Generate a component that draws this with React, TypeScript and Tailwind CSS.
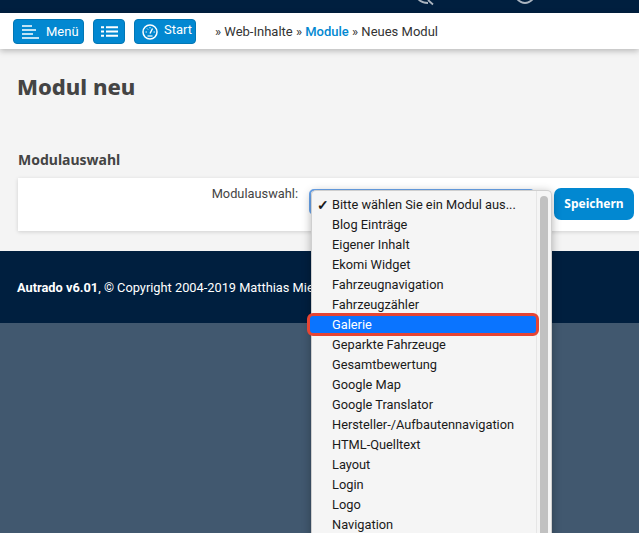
const modules = [
  "Blog Einträge",
  "Eigener Inhalt",
  "Ekomi Widget",
  "Fahrzeugnavigation",
  "Fahrzeugzähler",
  "Galerie",
  "Geparkte Fahrzeuge",
  "Gesamtbewertung",
  "Google Map",
  "Google Translator",
  "Hersteller-/Aufbautennavigation",
  "HTML-Quelltext",
  "Layout",
  "Login",
  "Logo",
  "Navigation",
];

function MenuIcon() {
  return (
    <svg width="17" height="14" viewBox="0 0 17 14" className="shrink-0">
      <path d="M0 1h10M0 5h14M0 9h11M0 13h17" stroke="white" strokeWidth="1.7" fill="none" />
    </svg>
  );
}

function ListIcon() {
  return (
    <svg width="17" height="11" viewBox="0 0 17 11">
      <path d="M0 1.2h3M0 5.5h3M0 9.8h3M5 1.2h12M5 5.5h12M5 9.8h12" stroke="white" strokeWidth="2" fill="none" />
    </svg>
  );
}

function GaugeIcon() {
  return (
    <svg width="16" height="16" viewBox="0 0 16 16" className="shrink-0">
      <circle cx="8" cy="8" r="7" stroke="white" strokeWidth="1.5" fill="none" />
      <path d="M8 9.5L10.5 4.5" stroke="white" strokeWidth="1.4" fill="none" />
      <path d="M3.5 8h1.5M11.5 8h1.5M5 4.5l1 1M8 3v1.3" stroke="white" strokeWidth="0.9" fill="none" />
      <path d="M5.5 12h5" stroke="white" strokeWidth="1.2" fill="none" />
    </svg>
  );
}

function TopBar() {
  return (
    <div className="relative h-[13px] shrink-0 overflow-hidden bg-[#001f3f]">
      <svg width="20" height="6" viewBox="0 0 20 6" className="absolute left-[417px] top-0">
        <path d="M1 -1Q5 3 11 3M11 0L16 4.5" stroke="#aab4bf" strokeWidth="1.8" fill="none" />
      </svg>
      <svg width="20" height="6" viewBox="0 0 20 6" className="absolute left-[515px] top-0">
        <path d="M2 -1Q10 7 18 -1" stroke="#aab4bf" strokeWidth="1.8" fill="none" />
      </svg>
    </div>
  );
}

function NavBar() {
  const btn =
    "flex h-[25px] items-center rounded-[4px] border border-[#0277b5] bg-[#0288d1] text-[13px] text-white";
  return (
    <div className="relative z-10 flex h-[36px] shrink-0 items-start bg-white pl-[13px] pt-[6px] shadow-[0_2px_6px_rgba(0,0,0,0.25)]">
      <button className={`${btn} w-[71px] gap-[7px] pl-[8px]`}>
        <MenuIcon />
        <span>Menü</span>
      </button>
      <button className={`${btn} ml-[9px] w-[32px] justify-center`}>
        <ListIcon />
      </button>
      <button className={`${btn} ml-[9px] w-[62px] gap-[6px] pl-[7px]`}>
        <GaugeIcon />
        <span className="-mt-[3px]">Start</span>
      </button>
      <div className="ml-[19px] mt-[4px] text-[13px] leading-[18px] text-[#333]">
        » Web-Inhalte » <span className="font-medium text-[#0288d1]">Module</span> » Neues Modul
      </div>
    </div>
  );
}

function Dropdown() {
  return (
    <div className="absolute left-[311px] top-[190px] z-20 h-[350px] w-[241px] rounded-t-[5px] border-x border-t border-[#cfcfcf] bg-[#f5f5f5] pt-[4px] text-[12.8px] leading-[20px] text-[#1a1a1a] shadow-[0_2px_10px_rgba(0,0,0,0.3)]">
      <div className="absolute bottom-0 right-0 top-0 w-[15px] border-l border-[#e6e6e6]">
        <div className="ml-[3px] mt-[5px] h-[360px] w-[8px] rounded-full bg-[#c1c1c1]" />
      </div>
      <div className="relative pl-[20px]">
        <span className="absolute left-[5px] top-0 text-[14px] font-bold">✓</span>
        Bitte wählen Sie ein Modul aus...
      </div>
      {modules.map((m) =>
        m === "Galerie" ? (
          <div key={m} className="relative pl-[20px] text-white">
            <div className="absolute -left-[5px] -top-[2px] h-[23px] w-[232px] rounded-[6px] border-[3px] border-[#e64433] bg-[#0a74ff]" />
            <span className="relative">{m}</span>
          </div>
        ) : (
          <div key={m} className="pl-[20px]">
            {m}
          </div>
        ),
      )}
    </div>
  );
}

export default function App() {
  return (
    <div className="relative flex h-[533px] w-[639px] flex-col overflow-hidden bg-[#41586f] font-['Roboto',sans-serif]">
      <TopBar />
      <NavBar />
      <main className="h-[202px] shrink-0 bg-[#f4f4f4] pl-[18px]">
        <h1 className="-ml-[1px] mt-[21px] font-['Noto_Sans',sans-serif] text-[22px] font-extrabold leading-[32px] text-[#444]">Modul neu</h1>
        <h2 className="mt-[48px] font-['Noto_Sans',sans-serif] text-[14px] font-bold leading-[20px] text-[#444]">Modulauswahl</h2>
        <div className="mt-[8px] flex h-[53px] w-[640px] items-start bg-white shadow-[0_1px_4px_rgba(0,0,0,0.15)]">
          <label className="mt-[7px] w-[280px] text-right text-[12.8px] leading-[18px] text-[#444]">Modulauswahl:</label>
          <div className="ml-[11px] mt-[11px] h-[26px] w-[226px] rounded-[5px] border-2 border-[#6ba6ee] bg-white" />
          <button className="ml-[19px] mt-[10px] h-[32px] w-[80px] rounded-[7px] bg-[#0288d1] font-['Noto_Sans',sans-serif] text-[12px] font-bold text-white">
            Speichern
          </button>
        </div>
      </main>
      <footer className="flex h-[72px] shrink-0 items-center bg-[#001f3f] pl-[17px] pt-[1px] text-[12.8px] text-white">
        <div>
          <b>Autrado v6.01</b>, © Copyright 2004-2019 Matthias Mies
        </div>
      </footer>
      <Dropdown />
    </div>
  );
}
